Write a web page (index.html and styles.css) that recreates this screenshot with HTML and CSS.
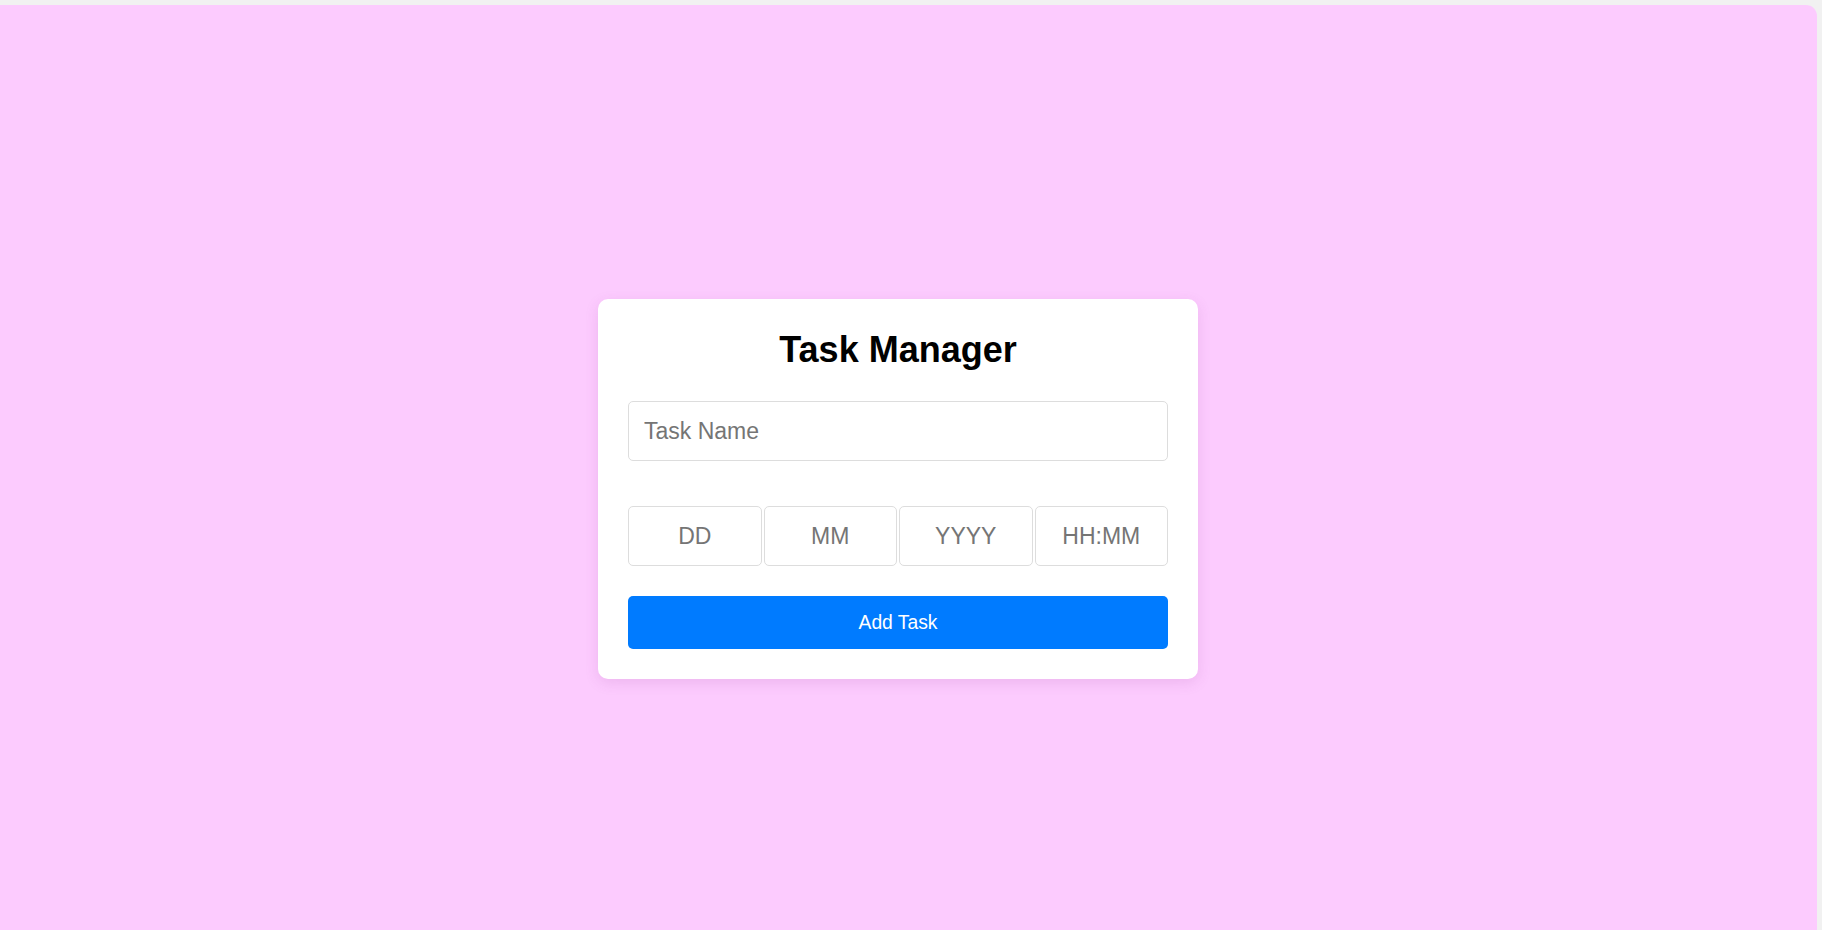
FILE: index.html
```html
<!DOCTYPE html>
<html lang="en">
<head>
<meta charset="utf-8">
<title>Task Manager</title>
<link rel="stylesheet" href="styles.css">
</head>
<body>
<div class="frame">
  <div class="card">
    <h1 class="title">Task Manager</h1>
    <input class="field task-name" type="text" placeholder="Task Name">
    <div class="date-row">
      <input class="field date-part" type="text" placeholder="DD">
      <input class="field date-part" type="text" placeholder="MM">
      <input class="field date-part" type="text" placeholder="YYYY">
      <input class="field date-part" type="text" placeholder="HH:MM">
    </div>
    <button class="add-btn" type="button">Add Task</button>
  </div>
</div>
</body>
</html>
```

FILE: styles.css
```css
html, body {
  margin: 0;
  padding: 0;
  height: 100%;
  overflow: hidden;
}

body {
  background: #f1f1f1;
  font-family: "Liberation Sans", Arial, sans-serif;
  padding-top: 5px;
  box-sizing: border-box;
}

.frame {
  width: 1817px;
  height: 960px;
  background: #fccbfe;
  border-top-right-radius: 11px;
  box-sizing: border-box;
  padding: 294px 21px 0 0;
  display: flex;
  justify-content: center;
  align-items: flex-start;
}

.card {
  width: 600px;
  box-sizing: border-box;
  background: #ffffff;
  border-radius: 10px;
  padding: 30px;
  box-shadow: 0 4px 14px rgba(150, 60, 150, 0.14);
  display: flex;
  flex-direction: column;
}

.title {
  margin: 0 0 30px;
  font-size: 36px;
  line-height: 42px;
  font-weight: bold;
  text-align: center;
  color: #000;
}

.field {
  box-sizing: border-box;
  height: 60px;
  border: 1px solid #dddddd;
  border-radius: 5px;
  background: #fff;
  font-family: "Liberation Sans", Arial, sans-serif;
  font-size: 23px;
  color: #333;
  outline: none;
  margin: 0;
}

.field::placeholder {
  color: #757575;
}

.task-name {
  width: 100%;
  padding: 0 15px;
  margin-bottom: 45px;
}

.date-row {
  display: flex;
  gap: 2px;
  margin-bottom: 30px;
}

.date-part {
  flex: 1 1 0;
  min-width: 0;
  padding: 0 8px;
  text-align: center;
}

.add-btn {
  height: 53px;
  width: 100%;
  border: none;
  border-radius: 5px;
  background: #007bff;
  color: #fff;
  font-family: "Liberation Sans", Arial, sans-serif;
  font-size: 19.3px;
  cursor: pointer;
}
```
